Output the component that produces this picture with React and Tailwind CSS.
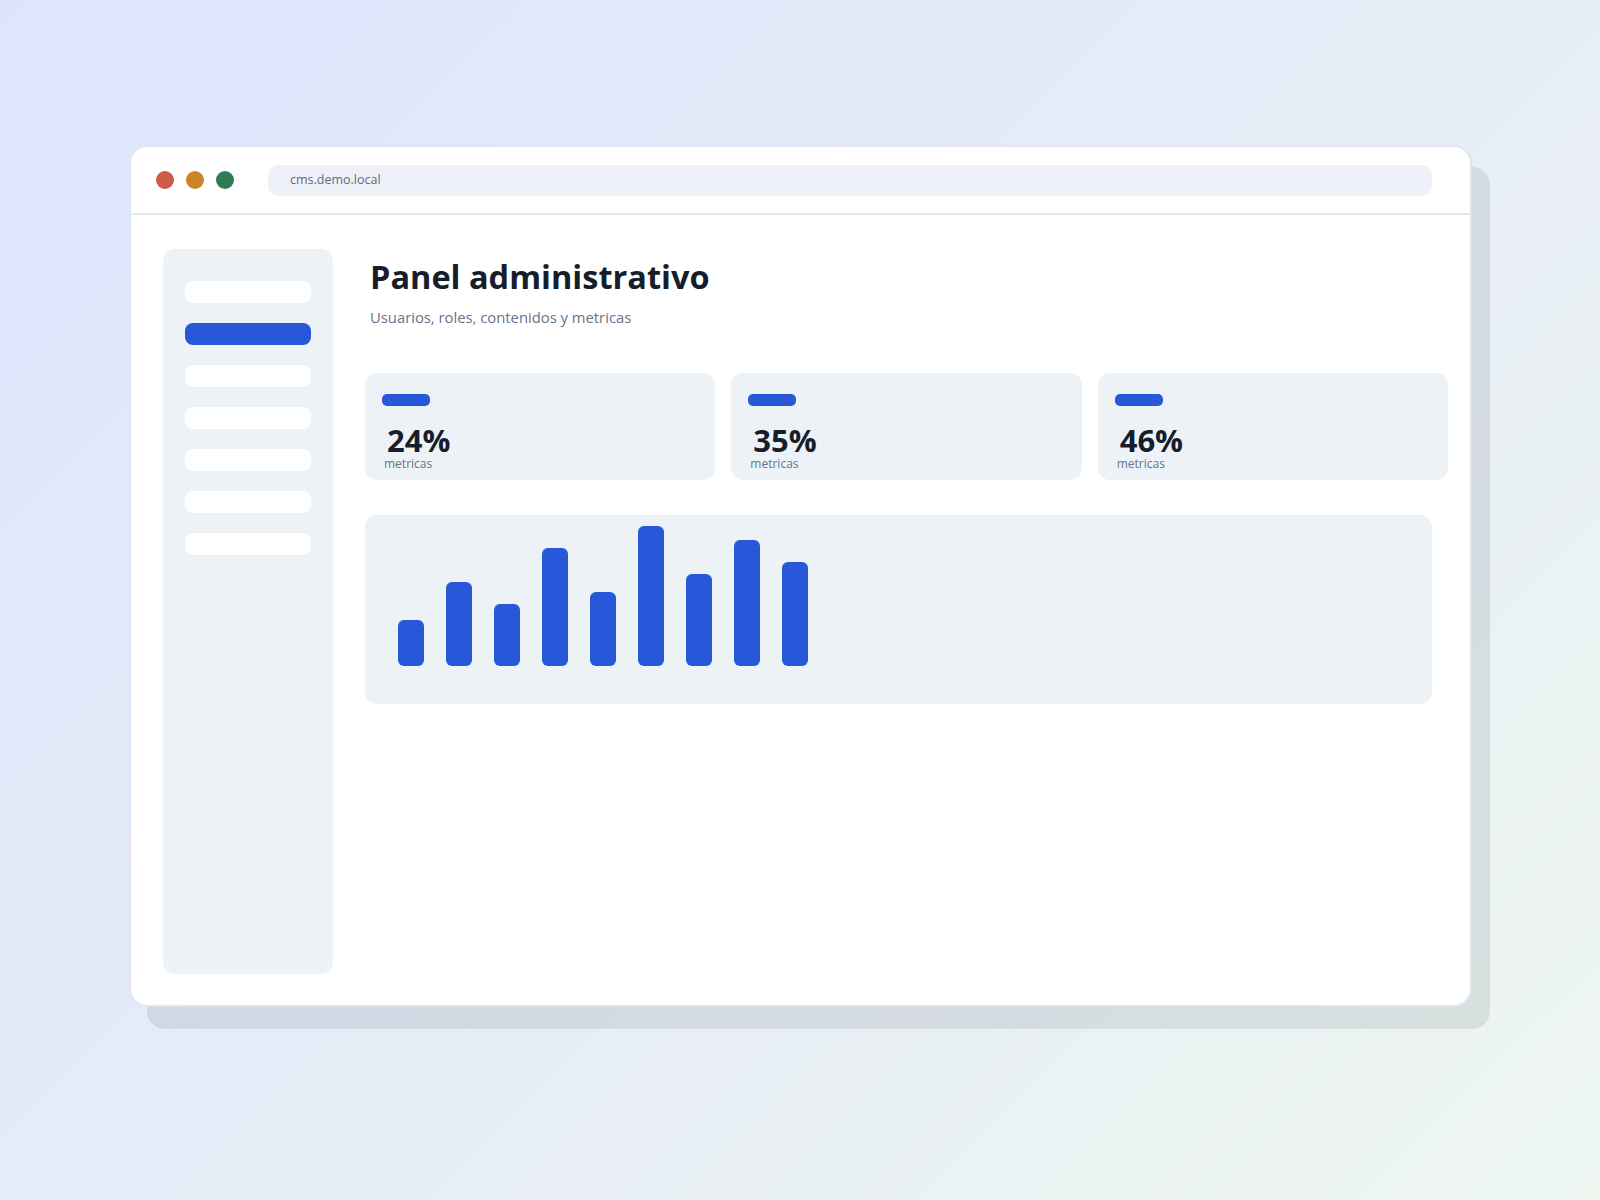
import React from "react";

const navItems = [false, true, false, false, false, false, false];

const stats = ["24%", "35%", "46%"];

const bars = [46, 84, 62, 118, 74, 140, 92, 126, 104];

export default function App() {
  return (
    <div
      className="min-h-[1200px] w-full bg-[linear-gradient(135deg,#dce5fd_0%,#e6ecf6_50%,#eef6f0_100%)] pl-[129px] pt-[145px]"
      style={{ fontFamily: '"Open Sans", "Noto Sans", Arial, sans-serif' }}
    >
      <div className="h-[862px] w-[1343px] rounded-[18px] border-2 border-[#dfe6f0] bg-white shadow-[18px_22px_0_rgba(15,23,42,0.09)]">
        {/* window chrome */}
        <div className="flex h-[68px] items-center border-b-2 border-[#e2e8f0] pl-[25px] pr-[38px]">
          <div className="flex gap-3">
            <span className="size-[18px] rounded-full bg-[#cd5b47]" />
            <span className="size-[18px] rounded-full bg-[#cc8524]" />
            <span className="size-[18px] rounded-full bg-[#2e7d52]" />
          </div>
          <div className="ml-[34px] flex h-[31px] flex-1 items-center rounded-[10px] bg-[#eef2f8] pl-[22px] text-[12.5px] text-[#5f6b7d]">
            cms.demo.local
          </div>
        </div>

        {/* page body */}
        <div className="flex gap-8 pl-8 pt-[34px]">
          <aside className="flex h-[725px] w-[170px] shrink-0 flex-col gap-5 rounded-xl bg-[#edf2f7] px-[22px] pt-8">
            {navItems.map((active, i) => (
              <div
                key={i}
                className={
                  active
                    ? "h-[22px] rounded-lg bg-[#2957d9]"
                    : "h-[22px] rounded-lg bg-white"
                }
              />
            ))}
          </aside>

          <main className="flex flex-col">
            <div className="pl-[5px] pt-[8px]">
              <h1 className="text-[32.5px] font-bold leading-[40px] text-[#161e2b]">
                Panel administrativo
              </h1>
              <p className="mt-[10px] text-[14.8px] leading-5 text-[#64748b]">
                Usuarios, roles, contenidos y metricas
              </p>
            </div>

            <div className="mt-[46px] grid w-[1083px] grid-cols-3 gap-4">
              {stats.map((value) => (
                <div
                  key={value}
                  className="flex h-[107px] flex-col rounded-xl bg-[#edf2f7] pl-[17px] pt-[21px]"
                >
                  <div className="h-3 w-12 rounded-[5px] bg-[#2957d9]" />
                  <div className="ml-[5px] mt-[21px] text-[31px] font-bold leading-[26px] text-[#161e2b]">
                    {value}
                  </div>
                  <div className="ml-[2px] mt-[4px] text-[12px] leading-[14px] text-[#64748b]">
                    metricas
                  </div>
                </div>
              ))}
            </div>

            <div className="mt-[35px] flex h-[189px] w-[1067px] items-end gap-[22px] rounded-xl bg-[#edf2f7] pb-[38px] pl-[33px]">
              {bars.map((h, i) => (
                <div
                  key={i}
                  className="w-[26px] rounded-[6px] bg-[#2957d9]"
                  style={{ height: `${h}px` }}
                />
              ))}
            </div>
          </main>
        </div>
      </div>
    </div>
  );
}
